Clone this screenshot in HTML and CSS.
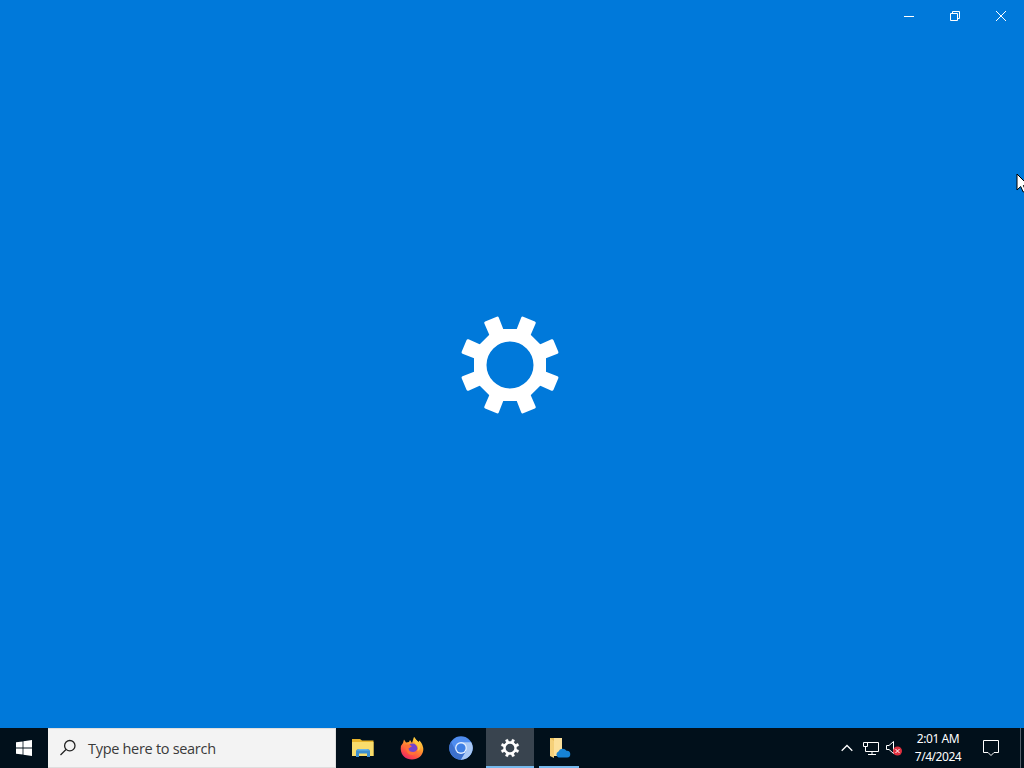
FILE: index.html
```html
<!DOCTYPE html>
<html lang="en">
<head>
    <meta charset="UTF-8">
    <meta name="viewport" content="width=device-width, initial-scale=1.0">
    <title>Settings</title>
    <link rel="stylesheet" href="styles.css">
</head>
<body>
    <!-- Shared gear shape, used by the splash and the taskbar -->
    <svg class="defs" width="0" height="0">
        <defs>
            <path id="tooth" d="M-6 -33L-6.3 -48.2H6.3L6 -33Z" stroke-width="3" stroke-linejoin="round"/>
            <g id="gear" fill="#fff" stroke="#fff">
                <path fill-rule="evenodd" stroke="none" d="M-14.9 -36H14.9L36 -14.9V14.9L14.9 36H-14.9L-36 14.9V-14.9ZM0 -23.5A23.5 23.5 0 1 0 0 23.5A23.5 23.5 0 1 0 0 -23.5Z"/>
                <use href="#tooth" transform="rotate(22.5)"/>
                <use href="#tooth" transform="rotate(67.5)"/>
                <use href="#tooth" transform="rotate(112.5)"/>
                <use href="#tooth" transform="rotate(157.5)"/>
                <use href="#tooth" transform="rotate(202.5)"/>
                <use href="#tooth" transform="rotate(247.5)"/>
                <use href="#tooth" transform="rotate(292.5)"/>
                <use href="#tooth" transform="rotate(337.5)"/>
            </g>
        </defs>
    </svg>

    <div class="desktop">
        <main class="window">
            <div class="titlebar">
                <button class="caption" aria-label="Minimize">
                    <svg width="12" height="12"><path d="M1 6.5H11" /></svg>
                </button>
                <button class="caption" aria-label="Restore">
                    <svg width="12" height="12"><path d="M1.5 3.5H8.5V10.5H1.5ZM3.5 3.5V1.5H10.5V8.5H8.5" /></svg>
                </button>
                <button class="caption" aria-label="Close">
                    <svg width="12" height="12"><path d="M1 1L11 11M11 1L1 11" /></svg>
                </button>
            </div>
            <div class="splash">
                <svg width="104" height="104" viewBox="-52 -52 104 104"><use href="#gear"/></svg>
            </div>
        </main>

        <footer class="taskbar">
            <button class="start" aria-label="Start">
                <svg width="16" height="16" fill="#fff">
                    <path d="M0 2.3L6.6 1.4V7.6H0ZM7.4 1.3L16 0V7.6H7.4ZM0 8.4H6.6V14.6L0 13.7ZM7.4 8.4H16V16L7.4 14.7Z"/>
                </svg>
            </button>
            <div class="search">
                <svg width="18" height="18" fill="none" stroke="#222" stroke-width="1.3">
                    <circle cx="9.8" cy="6.7" r="5.2"/>
                    <path d="M6 10.5L0.5 16"/>
                </svg>
                <span>Type here to search</span>
            </div>
            <div class="apps">
                <button class="app" aria-label="File Explorer">
                    <svg width="24" height="24">
                        <path d="M1 3H9L11 4.5H22.5V20H1Z" fill="#e8b52c"/>
                        <path d="M1 6H22.5V20H1Z" fill="#f8dc6c"/>
                        <path d="M5 21V15.5Q5 13 8 13H16Q19 13 19 15.5V21H16V17.5H8V21Z" fill="#3c8fd0"/>
                        <path d="M6 14.5Q6.5 13 8.5 13H15.5Q17.5 13 18 14.5Z" fill="#67b5e8"/>
                    </svg>
                </button>
                <button class="app" aria-label="Firefox">
                    <svg width="24" height="24">
                        <defs>
                            <linearGradient id="fox" x1=".8" y1="0" x2=".2" y2="1">
                                <stop offset="0" stop-color="#ffe04a"/>
                                <stop offset=".4" stop-color="#ff982e"/>
                                <stop offset=".75" stop-color="#ff4b45"/>
                                <stop offset="1" stop-color="#e6236e"/>
                            </linearGradient>
                        </defs>
                        <path d="M4 3.5L6 6.5L9 6L10 4L12 7L14 1Q16 4 18.5 6L19.5 4.5Q23.5 9 23.3 14C22.5 20 18 23.5 12 23.5S1 19.5.7 13Q.7 9 3 7Z" fill="url(#fox)"/>
                        <circle cx="12.5" cy="12.3" r="4.8" fill="#7444cc"/>
                        <path d="M5 9Q9 7.5 12 10.2L8.5 12.5Q9 16 13 16Q16 16 17.5 13Q17.5 18 12.5 19Q6 19 5 9Z" fill="#ff7138"/>
                        <path d="M14 1Q13 6 16.5 8.5Q19 11 17.5 15Q22 13 19.5 7Q16 4 14 1Z" fill="#ffca3d"/>
                    </svg>
                </button>
                <button class="app" aria-label="Chromium">
                    <svg width="24" height="24">
                        <circle cx="12" cy="12" r="11.7" fill="#4f8df0"/>
                        <path d="M12 6.3H22.2A11.7 11.7 0 0 1 11.7 23.7L17 15Z" fill="#a9c8f5"/>
                        <path d="M2 5.8A11.7 11.7 0 0 0 11.7 23.7L17 15L7 15Z" fill="#3c70cc"/>
                        <circle cx="12" cy="12" r="5.9" fill="#e2edff"/>
                        <circle cx="12" cy="12" r="4.6" fill="#3f80e5"/>
                    </svg>
                </button>
                <button class="app active" aria-label="Settings">
                    <svg width="20" height="20" viewBox="-54 -54 108 108"><use href="#gear"/></svg>
                </button>
                <button class="app running" aria-label="OneDrive setup">
                    <svg width="24" height="24">
                        <path d="M3 2H15V20H3Z" fill="#e9bd55"/>
                        <path d="M7 2H15V20H7Z" fill="#fce09a"/>
                        <path d="M3 2L7 5V22L3 20Z" fill="#f5d079"/>
                        <path d="M11.5 21.5A3.2 3.2 0 0 1 11.5 15.5A4.6 4.6 0 0 1 19.5 14.7A3.4 3.4 0 0 1 20.2 21.5Z" fill="#1683d5"/>
                    </svg>
                </button>
            </div>
            <div class="tray">
                <svg class="chevron" width="12" height="8"><path d="M.7 6.8L6 1.5L11.3 6.8"/></svg>
                <svg class="network" width="17" height="15">
                    <path d="M5 1.5H16.5V10.5H3.5V6M1.5 1.5H5.5V5.5H1.5ZM10 10.5V13.5M6 13.5H14"/>
                </svg>
                <svg class="volume" width="18" height="16">
                    <path d="M1.5 5.5H4L8.5 1.5V13.5L4 9.5H1.5Z"/>
                    <circle class="muted" cx="12.5" cy="11" r="4.5"/>
                    <path d="M10.5 9L14.5 13M14.5 9L10.5 13"/>
                </svg>
                <div class="clock">
                    <span class="time">2:01 AM</span>
                    <span class="date">7/4/2024</span>
                </div>
                <svg class="notifications" width="18" height="18"><path d="M1.5 1.5H16.5V13.5H12L9 16.5L6 13.5H1.5Z"/></svg>
                <div class="show-desktop"></div>
            </div>
        </footer>
    </div>

    <svg class="cursor" width="13" height="20">
        <path d="M1 1V17L4.7 13.5L7.2 19L9.8 17.8L7.4 12.5H12.5Z" fill="#fff" stroke="#000"/>
    </svg>
</body>
</html>
```
FILE: styles.css
```css
body {
    margin: 0;
    overflow: hidden;
    font-family: "Noto Sans", "Open Sans", sans-serif;
}
.defs {
    position: absolute;
}
.desktop {
    display: flex;
    flex-direction: column;
    height: 100vh;
}
button {
    display: flex;
    align-items: center;
    justify-content: center;
    padding: 0;
    border: none;
    background: none;
}
svg {
    display: block;
    flex-shrink: 0;
}

/* Window */
.window {
    flex: 1;
    display: flex;
    flex-direction: column;
    background: #0079da;
}
.titlebar {
    display: flex;
    justify-content: flex-end;
    height: 32px;
}
.caption {
    width: 46px;
}
.caption svg {
    fill: none;
    stroke: #fff;
}
.splash {
    flex: 1;
    display: flex;
    align-items: center;
    justify-content: center;
    padding: 0 4px 30px 0;
}

/* Taskbar */
.taskbar {
    display: flex;
    height: 40px;
    background: #01101b;
    color: #fff;
}
.start {
    width: 48px;
}
.search {
    display: flex;
    align-items: center;
    gap: 10px;
    width: 288px;
    box-sizing: border-box;
    padding-left: 12px;
    border: 1px solid #dedede;
    border-left: none;
    background: #f3f3f3;
    color: #3a3a3a;
    font-family: "Open Sans", sans-serif;
    font-size: 14.5px;
    letter-spacing: -0.3px;
}
.search svg {
    margin-bottom: 1px;
}
.apps {
    display: flex;
    gap: 1px;
    padding-left: 3px;
}
.app {
    width: 48px;
    box-sizing: border-box;
}
.active {
    background: #39444f;
    border-bottom: 2px solid #76b9ed;
    padding-top: 2px;
}
.running {
    width: 40px;
    margin-left: 4px;
    border-bottom: 2px solid #76b9ed;
    padding-top: 2px;
}
.tray {
    display: flex;
    align-items: center;
    margin-left: auto;
}
.tray svg {
    fill: none;
    stroke: #fff;
}
.tray .chevron {
    margin-right: 9px;
    stroke-width: 1.3;
}
.network {
    margin-right: 6px;
}
.tray .muted {
    fill: #e0303f;
    stroke: none;
}
.clock {
    display: flex;
    flex-direction: column;
    align-items: center;
    width: 48px;
    margin: 0 20px 0 11px;
    font-size: 12px;
    line-height: 18px;
    letter-spacing: -0.45px;
    white-space: nowrap;
}
.show-desktop {
    width: 3px;
    height: 40px;
    margin-left: 20px;
    border-left: 1px solid #56616b;
}

/* Pointer resting at the right edge of the screen */
.cursor {
    position: absolute;
    left: 1016px;
    top: 173px;
}
```
